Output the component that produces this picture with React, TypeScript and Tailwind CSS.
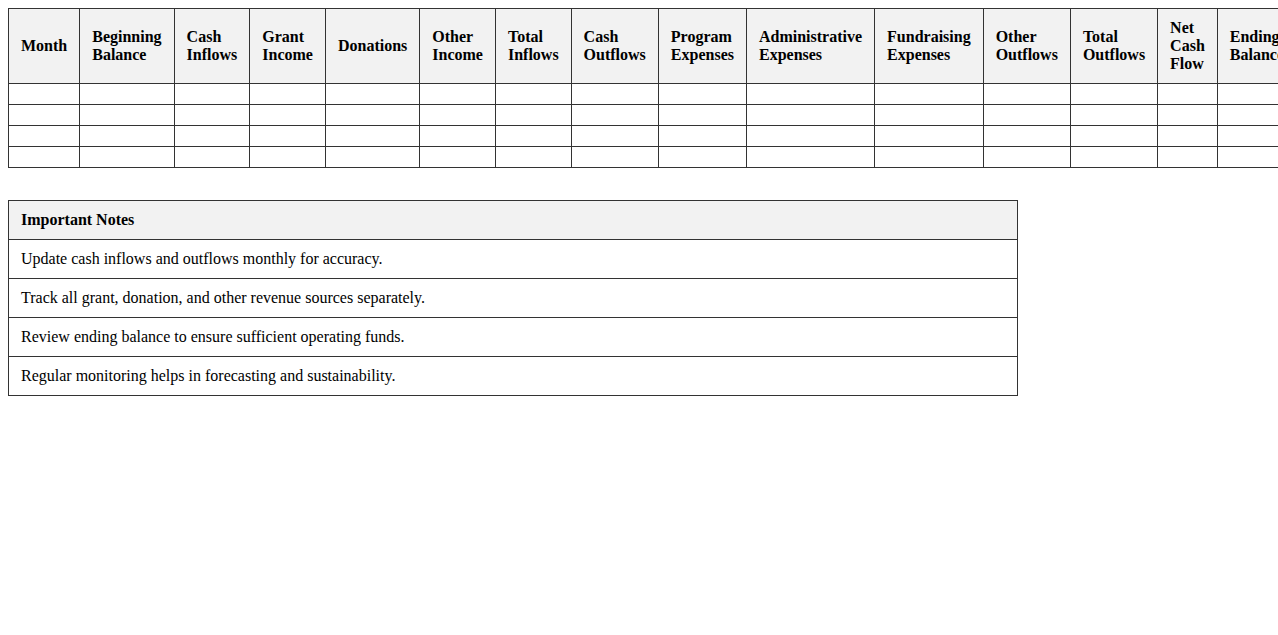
import React from "react";

const headers = [
  "Month",
  "Beginning Balance",
  "Cash Inflows",
  "Grant Income",
  "Donations",
  "Other Income",
  "Total Inflows",
  "Cash Outflows",
  "Program Expenses",
  "Administrative Expenses",
  "Fundraising Expenses",
  "Other Outflows",
  "Total Outflows",
  "Net Cash Flow",
  "Ending Balance",
];

const notes = [
  "Update cash inflows and outflows monthly for accuracy.",
  "Track all grant, donation, and other revenue sources separately.",
  "Review ending balance to ensure sufficient operating funds.",
  "Regular monitoring helps in forecasting and sustainability.",
];

export default function App() {
  return (
    <div className="w-full overflow-hidden bg-white">
      <div
        className="p-2 text-black text-[16px] leading-[normal]"
        style={{ fontFamily: '"Liberation Serif", "Times New Roman", serif' }}
      >
        <table className="w-full border-collapse">
          <thead>
            <tr>
              {headers.map((h) => (
                <th
                  key={h}
                  className="border border-[#333] bg-[#f2f2f2] px-3 py-[10px] text-left font-bold align-middle"
                >
                  {h}
                </th>
              ))}
            </tr>
          </thead>
          <tbody>
            {[0, 1, 2, 3].map((r) => (
              <tr key={r}>
                {headers.map((h) => (
                  <td key={h} className="border border-[#333] px-3 py-[10px]"></td>
                ))}
              </tr>
            ))}
          </tbody>
        </table>

        <table className="mt-8 w-[80%] border-collapse">
          <thead>
            <tr>
              <th className="border border-[#333] bg-[#f2f2f2] px-3 py-[10px] text-left font-bold">
                Important Notes
              </th>
            </tr>
          </thead>
          <tbody>
            {notes.map((n) => (
              <tr key={n}>
                <td className="border border-[#333] px-3 py-[10px]">{n}</td>
              </tr>
            ))}
          </tbody>
        </table>
      </div>
    </div>
  );
}
